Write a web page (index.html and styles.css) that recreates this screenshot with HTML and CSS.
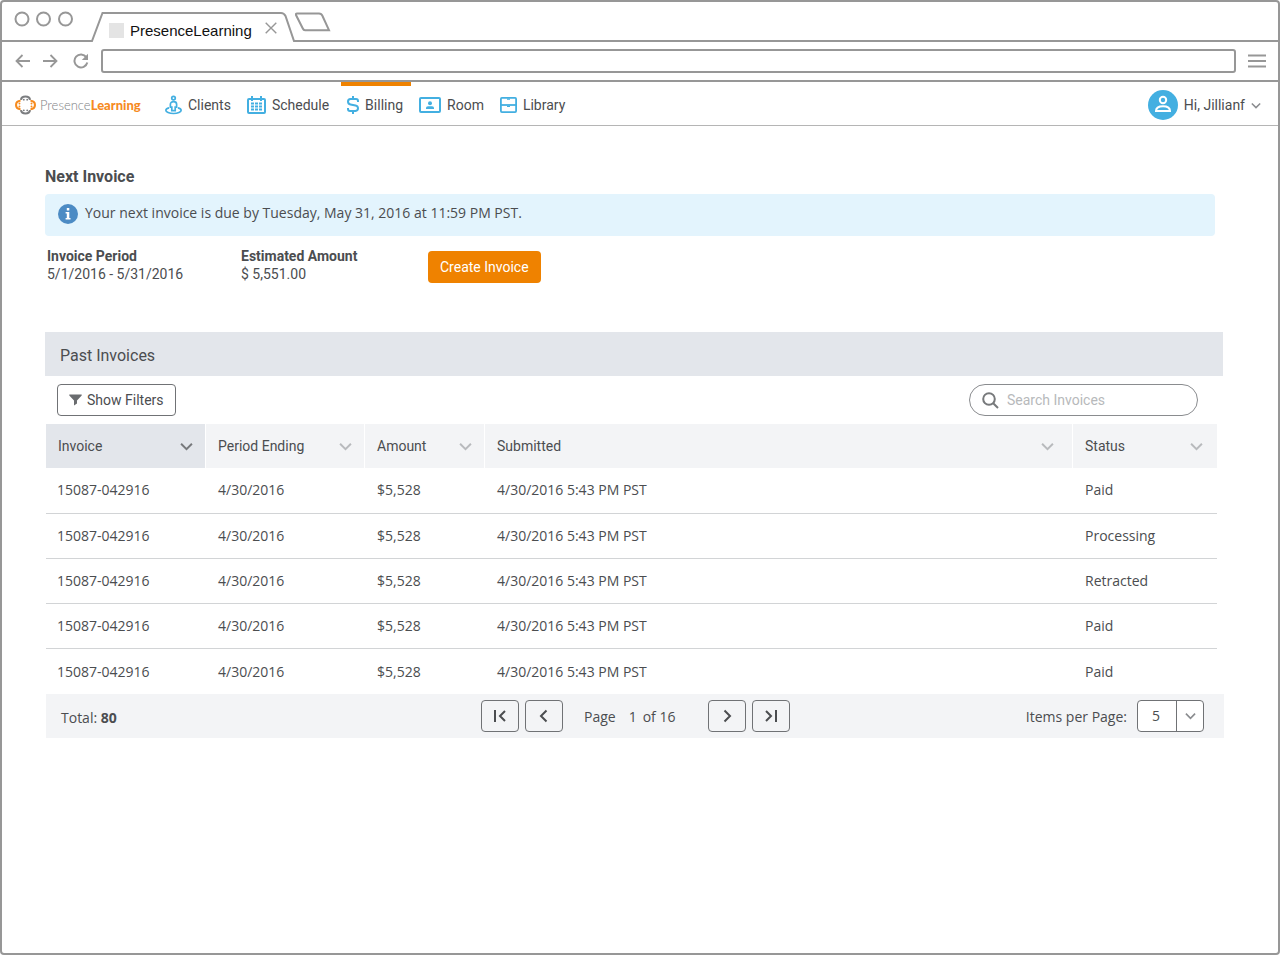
FILE: index.html
```html
<!DOCTYPE html>
<html lang="en">
<head>
<meta charset="utf-8">
<meta name="viewport" content="width=device-width, initial-scale=1">
<title>PresenceLearning</title>
<link rel="stylesheet" href="styles.css">
</head>
<body>
<svg class="sprite" aria-hidden="true">
  <symbol id="chevron" viewBox="0 0 12 8"><path d="M1 1.5 6 6.5 11 1.5" fill="none" stroke="currentColor" stroke-width="1.8"/></symbol>
</svg>
<div class="window">
  <div class="tab-strip">
    <div class="lights">
      <svg width="60" height="16" viewBox="0 0 60 16" fill="none" stroke="#979797" stroke-width="2"><circle cx="8" cy="8" r="6.5"/><circle cx="29.500" cy="8" r="6.500"/><circle cx="51.500" cy="8" r="6.500"/></svg>
    </div>
    <div class="tab">
      <svg class="tab-shape" width="204" height="30" viewBox="0 0 204 30"><path d="M0 29H1L11.500 1H190Q193 1 194.500 4L203 29H204" fill="none" stroke="#979797" stroke-width="2"/></svg>
      <span class="favicon"></span>
      <span class="tab-title">PresenceLearning</span>
      <button class="plain tab-close" aria-label="Close tab"><svg width="12" height="12" viewBox="0 0 12 12"><path d="M.7.700 11.300 11.300M11.300.700.700 11.300" stroke="#979797" stroke-width="1.400"/></svg></button>
    </div>
    <div class="strip-rest">
      <button class="plain" aria-label="New tab"><svg width="36" height="20" viewBox="0 0 36 20"><path d="M2 1.500H24Q26.500 1.500 27.500 4L34 18.200H10Q8.500 18.200 7.800 16.500L1 3Q.5 1.500 2 1.500Z" fill="none" stroke="#979797" stroke-width="2"/></svg></button>
    </div>
  </div>
  <div class="toolbar">
    <button class="plain" aria-label="Back"><svg width="16" height="14" viewBox="0 0 16 14" fill="none" stroke="#979797" stroke-width="1.800"><path d="M15 7H1.500M7.500 1 1.500 7 7.500 13"/></svg></button>
    <button class="plain" aria-label="Forward"><svg width="16" height="14" viewBox="0 0 16 14" fill="none" stroke="#979797" stroke-width="1.800"><path d="M1 7H14.500M8.500 1 14.500 7 8.500 13"/></svg></button>
    <button class="plain reload" aria-label="Reload"><svg width="16" height="16" viewBox="0 0 16 16"><path d="M13.300 4.200A6.500 6.500 0 1 0 14.300 9.500" fill="none" stroke="#979797" stroke-width="2"/><path d="M15 .8V7H8.800Z" fill="#979797"/></svg></button>
    <input class="address" type="text" aria-label="Address">
    <button class="plain" aria-label="Menu"><svg width="20" height="14" viewBox="0 0 20 14"><path d="M1 1.500H19M1 7H19M1 12.500H19" stroke="#979797" stroke-width="1.800"/></svg></button>
  </div>

  <header class="site-nav">
    <a class="logo" href="#">
      <svg width="21" height="20" viewBox="0 0 22 20" fill="none" stroke-width="2.200">
        <path d="M6.200 4.600C6.600 2.200 8.400 1.100 11 1.100S15.400 2.200 15.800 4.600" stroke="#7b7d80"/>
        <path d="M6.200 15.400C6.600 17.800 8.400 18.900 11 18.900S15.400 17.800 15.800 15.400" stroke="#7b7d80"/>
        <path d="M5.800 5.600C2.800 5.800 1.100 7.600 1.100 10S2.800 14.200 5.800 14.400" stroke="#f68b1f"/>
        <path d="M16.200 5.600C19.200 5.800 20.900 7.600 20.900 10S19.200 14.200 16.200 14.400" stroke="#f68b1f"/>
        <g fill="#7b7d80"><circle cx="9.200" cy="4.400" r="1"/><circle cx="12.800" cy="4.400" r="1"/><circle cx="9.200" cy="15.600" r="1"/><circle cx="12.800" cy="15.600" r="1"/></g>
        <g fill="#f68b1f"><circle cx="4.700" cy="8.400" r="1"/><circle cx="4.700" cy="11.600" r="1"/><circle cx="17.300" cy="8.400" r="1"/><circle cx="17.300" cy="11.600" r="1"/></g>
      </svg>
      <span class="logo-text">Presence<b>Learning</b></span>
    </a>
    <nav>
      <a href="#"><svg width="17" height="20" viewBox="0 0 18 20" fill="none" stroke="#43afe1" stroke-width="1.800"><circle cx="9" cy="2.700" r="1.900"/><path d="M9 6.500C7 6.500 5.700 7.500 5.700 9.300V12.200H7.200V16H10.800V12.200H12.300V9.300C12.300 7.500 11 6.500 9 6.500Z"/><path d="M4.300 13C2.300 13.500.900 14.400.900 15.500.900 17.500 4.500 19 9 19S17.100 17.500 17.100 15.500C17.100 14.400 15.700 13.500 13.700 13"/></svg>Clients</a>
      <a href="#"><svg width="19" height="18" viewBox="0 0 19 18"><rect x="1" y="3" width="17" height="14" rx="1" fill="none" stroke="#43afe1" stroke-width="2"/><path d="M5 0V5M14 0V5" stroke="#43afe1" stroke-width="2"/><path d="M4 7.500H7M8 7.500H11M12 7.500H15M4 10.500H7M8 10.500H11M12 10.500H15M4 13.500H7M8 13.500H11M12 13.500H15" stroke="#43afe1" stroke-width="2.200"/></svg>Schedule</a>
      <a class="current" href="#" aria-current="page"><svg width="12" height="18" viewBox="0 0 12 18" fill="none" stroke="#43afe1" stroke-width="2"><path d="M11 6V5Q11 3 9 3H3.500Q1 3 1 5.500T3.500 8.500L8.500 9.500Q11 10 11 12.300T8.500 15H3Q1 15 1 13V12M6 0V3M6 15V18"/></svg>Billing</a>
      <a href="#"><svg width="22" height="16" viewBox="0 0 22 16"><rect x="1" y="1" width="20" height="14" rx="1" fill="none" stroke="#43afe1" stroke-width="2"/><circle cx="11" cy="6.200" r="2" fill="#43afe1"/><path d="M7 12V11Q7 9.300 9 9.300H13Q15 9.300 15 11V12Z" fill="#43afe1"/></svg>Room</a>
      <a href="#"><svg width="17" height="16" viewBox="0 0 17 16" fill="none" stroke="#43afe1" stroke-width="1.800"><rect x=".9" y=".9" width="15.200" height="14.200" rx="1"/><path d="M1 8H16"/><path d="M7 2.200H10M7 9.300H10" stroke-width="1.200"/></svg>Library</a>
    </nav>
    <button class="plain user">
      <svg width="30" height="30" viewBox="0 0 30 30"><circle cx="15" cy="15" r="15" fill="#43afe1"/><g fill="none" stroke="#fff" stroke-width="2"><circle cx="15" cy="10" r="3.200"/><path d="M8 21C8 17.800 11 16.200 15 16.200S22 17.800 22 21Z"/></g></svg>
      <span>Hi, Jillianf</span>
      <svg class="chevron small" width="10" height="7"><use href="#chevron"/></svg>
    </button>
  </header>

  <main>
    <section class="next">
      <h1>Next Invoice</h1>
      <p class="notice"><svg width="20" height="20" viewBox="0 0 20 20"><circle cx="10" cy="10" r="10" fill="#4c8bc4"/><path d="M8.800 4H11.300V6.400H8.800ZM7.600 8H11.300V14H12.500V15.500H7.600V14H8.800V9.400H7.600Z" fill="#fff"/></svg><span>Your next invoice is due by Tuesday, May 31, 2016 at 11:59 PM PST.</span></p>
      <div class="summary">
        <dl>
          <div><dt>Invoice Period</dt><dd>5/1/2016 - 5/31/2016</dd></div>
          <div><dt>Estimated Amount</dt><dd>$ 5,551.00</dd></div>
        </dl>
        <button class="create">Create Invoice</button>
      </div>
    </section>

    <section>
      <h2>Past Invoices</h2>
      <div class="tools">
        <button class="filters"><svg width="13" height="12" viewBox="0 0 13 12"><path d="M.3.500H12.700V1.500L8 6.500V9.500L5 11.500V6.500L.3 1.500Z" fill="#6a6c6f"/></svg>Show Filters</button>
        <label class="search">
          <svg width="17" height="17" viewBox="0 0 17 17" fill="none" stroke="#77797b" stroke-width="2"><circle cx="7" cy="7" r="5.800"/><path d="M11.200 11.200 16 16"/></svg>
          <input type="search" placeholder="Search Invoices" aria-label="Search Invoices">
        </label>
      </div>
      <table>
        <colgroup><col class="c-invoice"><col class="c-period"><col class="c-amount"><col><col class="c-status"></colgroup>
        <thead>
          <tr>
            <th class="sorted"><button class="plain sort">Invoice <svg class="chevron" width="13" height="9"><use href="#chevron"/></svg></button></th>
            <th><button class="plain sort">Period Ending <svg class="chevron" width="13" height="9"><use href="#chevron"/></svg></button></th>
            <th><button class="plain sort">Amount <svg class="chevron" width="13" height="9"><use href="#chevron"/></svg></button></th>
            <th class="submitted"><button class="plain sort">Submitted <svg class="chevron" width="13" height="9"><use href="#chevron"/></svg></button></th>
            <th><button class="plain sort">Status <svg class="chevron" width="13" height="9"><use href="#chevron"/></svg></button></th>
          </tr>
        </thead>
        <tbody>
          <tr><td>15087-042916</td><td>4/30/2016</td><td>$5,528</td><td>4/30/2016 5:43 PM PST</td><td>Paid</td></tr>
          <tr><td>15087-042916</td><td>4/30/2016</td><td>$5,528</td><td>4/30/2016 5:43 PM PST</td><td>Processing</td></tr>
          <tr><td>15087-042916</td><td>4/30/2016</td><td>$5,528</td><td>4/30/2016 5:43 PM PST</td><td>Retracted</td></tr>
          <tr><td>15087-042916</td><td>4/30/2016</td><td>$5,528</td><td>4/30/2016 5:43 PM PST</td><td>Paid</td></tr>
          <tr><td>15087-042916</td><td>4/30/2016</td><td>$5,528</td><td>4/30/2016 5:43 PM PST</td><td>Paid</td></tr>
        </tbody>
      </table>
      <footer class="pager">
        <div class="total">Total: <b>80</b></div>
        <div class="pages">
          <button class="page" aria-label="First page"><svg width="14" height="14" viewBox="0 0 14 14"><path d="M2 1V13M12 2 7 7 12 12"/></svg></button>
          <button class="page" aria-label="Previous page"><svg width="14" height="14" viewBox="0 0 14 14"><path d="M9.500 1.500 4 7 9.500 12.500"/></svg></button>
          <span class="position"><span>Page</span><span class="number">1</span><span>of 16</span></span>
          <button class="page" aria-label="Next page"><svg width="14" height="14" viewBox="0 0 14 14"><path d="M4.500 1.500 10 7 4.500 12.500"/></svg></button>
          <button class="page" aria-label="Last page"><svg width="14" height="14" viewBox="0 0 14 14"><path d="M12 1V13M2 2 7 7 2 12"/></svg></button>
        </div>
        <div class="per-page">
          <label for="per-page">Items per Page:</label>
          <span class="picker">
            <select id="per-page"><option>5</option><option>10</option><option>25</option></select>
            <span class="picker-arrow"><svg class="chevron small" width="11" height="8"><use href="#chevron"/></svg></span>
          </span>
        </div>
      </footer>
    </section>
  </main>
</div>
</body>
</html>
```
FILE: styles.css
```css
* { box-sizing: border-box; }
body {
  margin: 0;
  background: #fff;
  color: #4b4d50;
  font: 14px/18px Roboto, sans-serif;
}
button, input, select { font: inherit; color: inherit; }
button { cursor: pointer; }
a { color: inherit; text-decoration: none; }
svg { display: block; flex: none; }
.sprite { position: absolute; width: 0; height: 0; }
.plain { padding: 0; border: 0; background: none; }

.window {
  min-height: 100vh;
  border: 2px solid #979797;
  border-radius: 4px;
}

/* Browser chrome */
.tab-strip { display: flex; height: 40px; }
.lights {
  width: 89px;
  padding: 9px 0 0 12px;
  border-bottom: 2px solid #979797;
}
.tab {
  position: relative;
  display: flex;
  align-items: center;
  width: 204px;
  margin-top: 10px;
  padding: 7px 18px 0;
}
.tab-shape { position: absolute; left: 0; bottom: 0; }
.favicon { width: 15px; height: 15px; background: #e4e4e4; }
.tab-title {
  margin-left: 6px;
  color: #111;
  font: 15px/18px "Liberation Sans", Arial, sans-serif;
}
.tab-close { margin: 0 0 6px auto; }
.strip-rest { flex: 1; padding-top: 10px; border-bottom: 2px solid #979797; }
.toolbar {
  display: flex;
  align-items: center;
  gap: 11px;
  height: 40px;
  padding: 0 11px 0 13px;
  border-bottom: 2px solid #979797;
}
.reload { margin: 0 1px 0 4px; }
.address {
  flex: 1;
  min-width: 0;
  height: 24px;
  padding: 0 8px;
  border: 2px solid #979797;
  border-radius: 3px;
}

/* Site navigation */
.site-nav {
  display: flex;
  align-items: center;
  height: 44px;
  padding: 0 17px 0 13px;
  border-bottom: 1px solid #b5b5b5;
}
.logo { display: flex; align-items: center; gap: 4px; width: 142px; padding-top: 3px; }
.logo-text { color: #808285; font: 300 13px/18px Lato, sans-serif; }
.logo-text b { color: #f68b1f; font-weight: 900; }
nav { display: flex; align-self: stretch; }
nav a {
  display: flex;
  align-items: center;
  gap: 6px;
  padding: 3px 8px 0;
}
nav .current {
  margin-left: 4px;
  padding: 0 8px 1px 6px;
  border-top: 4px solid #ef8200;
}
.user { display: flex; align-items: center; gap: 6px; margin: 3px 0 0 auto; }

.chevron { color: #b8babd; }
.chevron.small { color: #8a8c8f; }
.sorted .chevron { color: #77797c; }

/* Content */
main { padding: 41px 54px 40px 43px; }
h1 { margin: 0 0 7px; font-size: 16px; line-height: 20px; font-weight: 700; }
.next { margin-bottom: 49px; }
.notice {
  display: flex;
  align-items: center;
  gap: 7px;
  height: 42px;
  margin: 0 9px 11px 0;
  padding: 0 13px 2px;
  border-radius: 4px;
  background: #e3f4fd;
  font-family: "Open Sans", sans-serif;
}
.notice span { padding-bottom: 2px; }
.summary { display: flex; align-items: flex-start; }
dl { display: flex; margin: 0; padding-left: 2px; }
dl div { width: 194px; }
dt { font-weight: 700; }
dd { margin: 0; }
.create {
  height: 32px;
  margin-top: 4px;
  margin-left: -7px;
  padding: 0 12px;
  border: 0;
  border-radius: 4px;
  background: #ef8200;
  color: #fff;
}
h2 {
  height: 44px;
  margin: 0 1px 0 0;
  padding: 4px 15px 0;
  background: #e3e6eb;
  font-size: 16px;
  line-height: 40px;
  font-weight: 400;
}
.tools { display: flex; justify-content: space-between; padding: 8px 26px 8px 12px; }
.filters {
  display: flex;
  align-items: center;
  gap: 5px;
  height: 32px;
  padding: 0 11px;
  border: 1px solid #707275;
  border-radius: 4px;
  background: #fff;
}
.search {
  display: flex;
  align-items: center;
  gap: 8px;
  width: 229px;
  height: 32px;
  padding: 0 12px;
  border: 1px solid #8a8c8f;
  border-radius: 16px;
}
.search input { flex: 1; min-width: 0; padding: 0; border: 0; outline: 0; background: none; }
.search input::placeholder { color: #b7b9bb; opacity: 1; }

table {
  width: calc(100% - 8px);
  margin-left: 1px;
  border-collapse: separate;
  border-spacing: 0;
  table-layout: fixed;
}
.c-invoice { width: 160px; }
.c-period { width: 159px; }
.c-amount { width: 120px; }
.c-status { width: 144px; }
th {
  height: 44px;
  padding: 0;
  border-right: 1px solid #fff;
  background: #f3f4f6;
  font-weight: 400;
}
th:last-child { border-right: 0; }
th.sorted { background: #e3e6eb; }
.sort {
  display: flex;
  align-items: center;
  justify-content: space-between;
  width: 100%;
  height: 44px;
  padding: 0 12px;
}
.submitted .sort { padding-right: 18px; }
th:last-child .sort { padding-right: 14px; }
td {
  height: 45px;
  padding: 0 12px;
  border-bottom: 1px solid #d2d4d6;
  font-family: "Open Sans", sans-serif;
}
td:first-child { padding-left: 11px; }
tr:last-child td { border-bottom: 0; }
tbody tr:first-child td { height: 46px; padding-bottom: 2px; }

.pager {
  display: grid;
  grid-template-columns: 1fr auto 1fr;
  align-items: center;
  height: 44px;
  margin-left: 1px;
  padding: 0 20px 0 15px;
  background: #f3f4f6;
  font-family: "Open Sans", sans-serif;
}
.total { padding-top: 4px; }
.pages { display: flex; gap: 6px; margin-left: 6px; }
.page {
  display: grid;
  place-items: center;
  width: 38px;
  height: 32px;
  padding: 0;
  border: 1px solid #707275;
  border-radius: 4px;
  background: none;
}
.page path { fill: none; stroke: #4b4d50; stroke-width: 2; }
.position {
  display: flex;
  align-items: center;
  width: 133px;
  padding: 2px 0 0 15px;
}
.number { width: 27px; padding-left: 13px; }
.per-page { display: flex; align-items: center; justify-content: flex-end; gap: 10px; }
.per-page label { padding-top: 2px; }
.picker { position: relative; display: flex; }
.picker select {
  width: 67px;
  height: 32px;
  padding: 0 14px;
  border: 1px solid #707275;
  border-radius: 4px;
  background: #fff;
  appearance: none;
}
.picker-arrow {
  position: absolute;
  inset: 0 0 0 auto;
  display: grid;
  place-items: center;
  width: 28px;
  border-left: 1px solid #707275;
  pointer-events: none;
}
```
